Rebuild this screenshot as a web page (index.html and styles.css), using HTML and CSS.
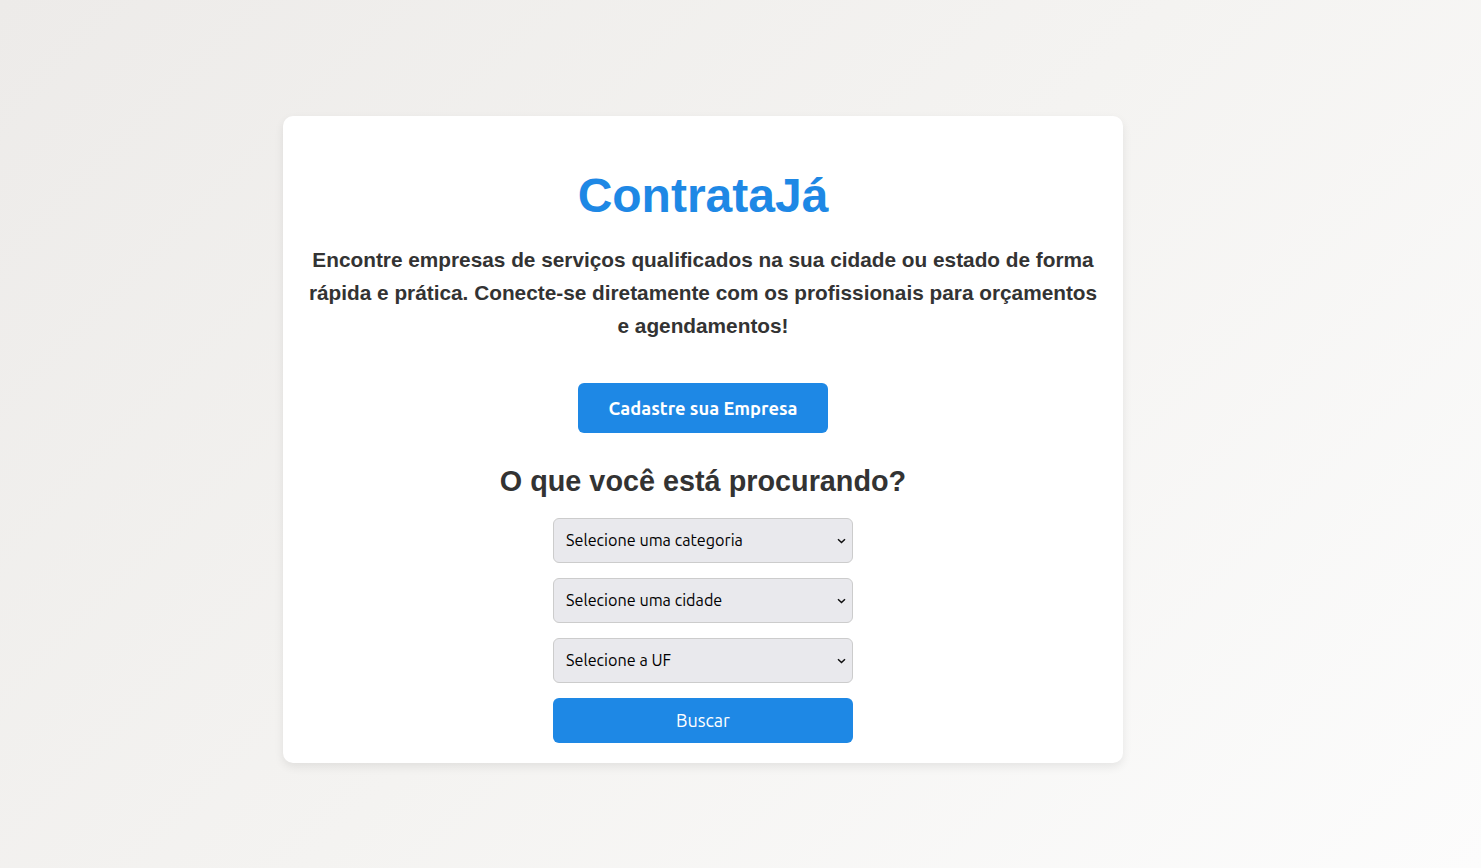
FILE: index.html
```html
<!DOCTYPE html>
<html lang="pt-BR">
<head>
<meta charset="utf-8">
<title>ContrataJá</title>
<link rel="stylesheet" href="styles.css">
</head>
<body>
<div class="page">
  <main class="card">
    <h1 class="brand">ContrataJá</h1>
    <p class="intro">Encontre empresas de serviços qualificados na sua cidade ou estado de forma rápida e prática. Conecte-se diretamente com os profissionais para orçamentos e agendamentos!</p>
    <button class="cta" type="button">Cadastre sua Empresa</button>
    <h2 class="search-title">O que você está procurando?</h2>
    <form class="search">
      <select class="field"><option>Selecione uma categoria</option></select>
      <select class="field"><option>Selecione uma cidade</option></select>
      <select class="field"><option>Selecione a UF</option></select>
      <button class="submit" type="button">Buscar</button>
    </form>
  </main>
</div>
</body>
</html>
```
FILE: styles.css
```css
html, body {
  margin: 0;
  height: 100%;
}
body {
  background: linear-gradient(135deg, #edebe9 0%, #f4f3f1 50%, #fcfcfc 100%);
  font-family: "Liberation Sans", Arial, sans-serif;
  color: #333;
}
.page {
  display: flex;
  justify-content: center;
  padding: 116px 75px 0 0;
}
.card {
  width: 840px;
  box-sizing: border-box;
  background: #fff;
  border-radius: 10px;
  box-shadow: 0 4px 10px rgba(0, 0, 0, 0.08);
  padding: 20px;
  display: flex;
  flex-direction: column;
  align-items: center;
  text-align: center;
}
.brand {
  font-size: 48px;
  font-weight: bold;
  color: #1e88e5;
  margin: 32px 0 20px;
  line-height: 55px;
}
.intro {
  font-size: 20.8px;
  font-weight: bold;
  line-height: 33px;
  margin: 0 0 41px;
}
.cta {
  width: 250px;
  height: 50px;
  background: #1e88e5;
  color: #fff;
  border: none;
  border-radius: 6px;
  font-family: Ubuntu, system-ui, "Open Sans", sans-serif;
  font-size: 18.3px;
  font-weight: bold;
  cursor: pointer;
}
.search-title {
  font-size: 28.8px;
  font-weight: bold;
  margin: 32px 0 20px;
  line-height: 33px;
}
.search {
  display: flex;
  flex-direction: column;
  gap: 15px;
  width: 300px;
}
.field {
  appearance: none;
  -webkit-appearance: none;
  height: 45px;
  padding: 0 24px 1px 12px;
  background-color: #e9e9ed;
  background-image: url("data:image/svg+xml,%3Csvg xmlns='http://www.w3.org/2000/svg' width='9' height='6' viewBox='0 0 9 6'%3E%3Cpath d='M1 1.2l3.5 3.3 3.5-3.3' fill='none' stroke='%23111' stroke-width='1.5'/%3E%3C/svg%3E");
  background-repeat: no-repeat;
  background-position: right 6px center;
  border: 1px solid #ccc;
  border-radius: 6px;
  font-family: Ubuntu, system-ui, "Open Sans", sans-serif;
  font-size: 16.2px;
  color: #000;
}
.submit {
  height: 45px;
  padding-bottom: 2px;
  background: #1e88e5;
  color: #fff;
  border: none;
  border-radius: 6px;
  font-family: Ubuntu, system-ui, "Open Sans", sans-serif;
  font-size: 18px;
}
```
